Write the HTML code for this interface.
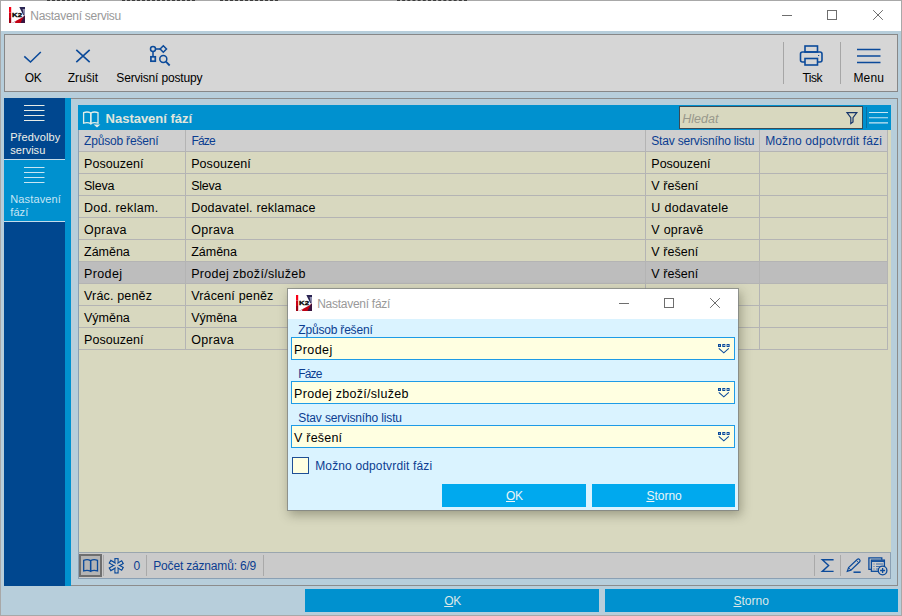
<!DOCTYPE html>
<html lang="cs">
<head>
<meta charset="utf-8">
<title>Nastavení servisu</title>
<style>
*{box-sizing:border-box;margin:0;padding:0}
html,body{width:902px;height:616px;overflow:hidden}
body{position:relative;background:#b7cedb;font-family:"Liberation Sans","DejaVu Sans",sans-serif;font-size:12.5px;color:#000}
.abs{position:absolute}
.t{position:absolute;white-space:nowrap;line-height:1}
#titlebar{left:1px;top:1px;width:900px;height:30px;background:#fff}
#toolbar{left:4px;top:34px;width:894px;height:58px;background:#d6d6d6;border:1px solid #878787}
#side{left:4px;top:98px;width:61px;height:488px;background:#00478f}
#sidestrip{left:65px;top:98px;width:6px;height:488px;background:#0091cf}
#sidesel{left:4px;top:160px;width:61px;height:61px;background:#0091cf}
#frame{left:71px;top:98px;width:827px;height:488px;border:1px solid #8c8c8c;border-left:none}
#phead{left:78px;top:105px;width:813px;height:25px;background:#0091cf}
#search{left:679px;top:106px;width:184px;height:23px;background:#d8d8bf;border:1px solid #3a4a55}
#grid{left:78px;top:130px;width:813px;height:422px;background:#d8d8bf;border-left:1px solid #8aa0b4}
#tw{position:absolute;left:0;top:0;width:902px;height:616px;padding:130px 0 0 79px}
table{border-collapse:separate;border-spacing:0;table-layout:fixed;width:809px}
td,th{height:22px;border-right:1px solid #b4b4b4;border-bottom:1px solid #b4b4b4;font-weight:normal}
th{background:#cfcfcf}
tr.sel td{background:#bdbdbd}
#status{left:78px;top:552px;width:813px;height:27px;background:#cacaca;border:1px solid #8aa0b4;border-top-color:#9aa6ae}
.bbtn{background:#0091cf;height:23px;top:589px}
#dlg{left:288px;top:289px;width:450px;height:221px;background:#daf3ff;box-shadow:0 0 0 1px rgba(125,130,130,.75),2px 4px 10px 1px rgba(50,50,30,.36)}
#dtitle{left:288px;top:289px;width:450px;height:30px;background:#fff}
.inp{background:#ffffe1;border:1px solid #1e9be6;height:23px;left:291px;width:444px}
.dbtn{background:#00a9ee;height:23px;top:484px}
u{text-decoration:underline;text-decoration-thickness:1px;text-underline-offset:0.500px}
</style>
</head>
<body>

<div class="abs" style="left:0;top:0;width:902px;height:1px;background:#a8a8a8"></div>
<div class="abs" style="left:0;top:0;width:1px;height:616px;background:#a8a8a8"></div>
<div class="abs" style="left:901px;top:0;width:1px;height:616px;background:#a8a8a8"></div>
<div class="abs" style="left:0;top:615px;width:902px;height:1px;background:#a8a8a8"></div>
<div class="abs" style="left:47px;top:0;width:43px;height:1px;border-top:1px dashed #3c3c3c"></div>
<div class="abs" style="left:122px;top:0;width:73px;height:1px;border-top:1px dashed #3c3c3c"></div>
<div class="abs" style="left:220px;top:0;width:58px;height:1px;border-top:1px dashed #3c3c3c"></div>
<div class="abs" style="left:397px;top:0;width:70px;height:1px;border-top:1px dashed #3c3c3c"></div>
<div id="titlebar" class="abs"></div>
<svg class="abs" style="left:9px;top:7px" width="16" height="16" viewBox="0 0 16 16">
  <rect x="0" y="0" width="16" height="16" fill="#fff"/>
  <rect x="0" y="0" width="2.200" height="5.500" fill="#f80016"/>
  <rect x="0" y="5.500" width="2.200" height="5.500" fill="#cc0014"/>
  <rect x="0" y="11" width="2.200" height="5" fill="#9c0011"/>
  <polygon points="10.300,0 16,0 16,8.200 14.300,8.200" fill="#2a2452"/>
  <polygon points="13.500,2 16,2 16,8.200 15,8.200" fill="#8f8fb0"/>
  <polygon points="3,16 16,16 16,8.600 13.600,10.300" fill="#c20012"/>
  <polygon points="3,16 6,16 6.500,14.200" fill="#d9dff0"/>
  <polygon points="11.500,16 16,16 16,8.600 14.500,9.700" fill="#3a1440"/>
  <text x="3" y="10" font-family="Liberation Sans, sans-serif" font-weight="bold" font-size="5.800" textLength="10" lengthAdjust="spacingAndGlyphs" fill="#000" stroke="#000" stroke-width="0.300">K2</text>
</svg>
<span class="t" id="t27" style="left:30.3px;top:10px;font-size:12px;color:#999;letter-spacing:-0.28px;">Nastavení servisu</span>
<svg class="abs" style="left:770px;top:1px" width="130" height="30" viewBox="0 0 130 30" fill="none" stroke="#6e6e6e" stroke-width="1">
  <path d="M12 14.500h10"/>
  <rect x="57.500" y="9.500" width="9" height="9"/>
  <path d="M103.500 9.500l9 9M112.500 9.500l-9 9" stroke-linecap="square"/>
</svg>

<div id="toolbar" class="abs"></div>
<svg class="abs" style="left:20px;top:44px" width="160" height="24" viewBox="0 0 160 24" fill="none" stroke="#0b4a9a" stroke-width="1.600">
  <path d="M4.300 12.400l6.200 5.600L20.800 8"/>
  <path d="M56.300 5.800l13.400 12.400M69.700 5.800L56.300 18.200"/>
  <g stroke-width="1.500">
  <circle cx="133" cy="5" r="2.500"/>
  <rect x="130.900" y="12.800" width="4.400" height="4.400" stroke-width="1.700"/>
  <path d="M133 7.500v4.500M135.500 5h4.600"/>
  <path d="M143.300 1.800l3.200 3.200-3.200 3.200-3.200-3.200z"/>
  <circle cx="143.300" cy="15.100" r="3.500"/>
  <path d="M145.900 17.700l3.800 3.800" stroke-width="1.800"/>
  </g>
</svg>
<span class="t" id="t28" style="left:24.8px;top:72px;font-size:12px;color:#000;letter-spacing:-0.32px;">OK</span>
<span class="t" id="t29" style="left:67.7px;top:72px;font-size:12px;color:#000;letter-spacing:0.07px;">Zrušit</span>
<span class="t" id="t30" style="left:116.3px;top:72px;font-size:12px;color:#000;letter-spacing:-0.17px;">Servisní postupy</span>
<div class="abs" style="left:783px;top:42px;width:1px;height:42px;background:#a6a6a6"></div>
<div class="abs" style="left:840px;top:42px;width:1px;height:42px;background:#a6a6a6"></div>
<svg class="abs" style="left:798px;top:43px" width="90" height="26" viewBox="0 0 90 26" fill="none" stroke="#0b4a9a" stroke-width="1.600">
  <rect x="7" y="3" width="12.500" height="6"/>
  <rect x="2.500" y="9" width="21.500" height="10" rx="2"/>
  <rect x="7" y="15.500" width="12.500" height="6.500" fill="#d6d6d6"/>
  <path d="M20 12.500h1.200" stroke-width="1.200"/>
  <path d="M59 6.500h23.500M59 13h23.500M59 19.500h23.500" stroke-width="1.400"/>
</svg>
<span class="t" id="t31" style="left:802.4px;top:72px;font-size:12px;color:#000;letter-spacing:-0.44px;">Tisk</span>
<span class="t" id="t32" style="left:853.4px;top:72px;font-size:12px;color:#000;letter-spacing:0.17px;">Menu</span>

<div id="side" class="abs"></div>
<div id="sidesel" class="abs"></div>
<div id="sidestrip" class="abs"></div>
<div class="abs" style="left:4px;top:159px;width:61px;height:1px;background:#c4dcea"></div>
<div class="abs" style="left:4px;top:221px;width:61px;height:1px;background:#c4dcea"></div>
<svg class="abs" style="left:24px;top:104px" width="21" height="80" viewBox="0 0 21 80" stroke="#e8ece6" stroke-width="1.100">
  <path d="M0 1.500h20.500M0 6.500h20.500M0 11.500h20.500M0 16.500h20.500"/>
  <path d="M0 63.500h20.500M0 68.500h20.500M0 73.500h20.500M0 78.500h20.500" stroke="#c9e6f3"/>
</svg>
<span class="t" id="t33" style="left:10.3px;top:132px;font-size:11px;color:#f0f2ea;letter-spacing:0.14px;">Předvolby</span>
<span class="t" id="t34" style="left:10.3px;top:145px;font-size:11px;color:#f0f2ea;letter-spacing:0.02px;">servisu</span>
<span class="t" id="t35" style="left:10.3px;top:194px;font-size:11px;color:#c5e5f4;letter-spacing:0.12px;">Nastavení</span>
<span class="t" id="t36" style="left:10.3px;top:207px;font-size:11px;color:#c5e5f4;letter-spacing:0.07px;">fází</span>

<div id="frame" class="abs"></div>
<div id="phead" class="abs"></div>
<svg class="abs" style="left:82px;top:110px" width="20" height="18" viewBox="0 0 20 18" fill="none" stroke="#e4eee8" stroke-width="1.300">
  <path d="M1.600 2.600q4-1.400 7.200 .4v10.600q-3.200-1.600-7.200-.4z"/>
  <path d="M16 2.600q-4-1.400-7.200 .4v10.600q3.200-1.600 7.200-.4z"/>
  <path d="M11.600 14.600h6.800l-3.400 3z" fill="#e4eee8" stroke="none"/>
</svg>
<span class="t" id="t37" style="left:105.6px;top:112px;font-size:13px;color:#e0e6dc;letter-spacing:-0.02px;font-weight:bold;">Nastavení fází</span>
<div id="search" class="abs"></div>
<span class="t" id="t38" style="left:682.2px;top:113px;font-size:12.5px;color:#98988c;letter-spacing:0.04px;font-style:italic;">Hledat</span>
<svg class="abs" style="left:845px;top:111px" width="14" height="14" viewBox="0 0 14 14" fill="none" stroke="#16356b" stroke-width="1.200">
  <path d="M2 1.700h9.800l-3.800 5v4.300l-2.200 1.500V6.700z"/>
</svg>
<div class="abs" style="left:866px;top:107px;width:1px;height:21px;background:#0a6fa3"></div>
<svg class="abs" style="left:869px;top:110px" width="20" height="16" viewBox="0 0 20 16" stroke="#c9e6f3" stroke-width="1.100">
  <path d="M0 2.500h19M0 7.700h19M0 12.900h19"/>
</svg>

<div id="grid" class="abs"></div>
<div id="tw"><table>
<colgroup><col style="width:107px"><col style="width:460px"><col style="width:114px"><col style="width:128px"></colgroup>
<tr><th><span class="t" id="t39" style="left:84.0px;top:135px;font-size:12px;color:#0b3d91;letter-spacing:-0.18px;">Způsob řešení</span></th><th><span class="t" id="t40" style="left:191.4px;top:135px;font-size:12px;color:#0b3d91;letter-spacing:-0.82px;">Fáze</span></th><th><span class="t" id="t41" style="left:651.3px;top:135px;font-size:12px;color:#0b3d91;letter-spacing:-0.18px;">Stav servisního listu</span></th><th><span class="t" id="t42" style="left:765.2px;top:135px;font-size:12px;color:#0b3d91;letter-spacing:0.13px;">Možno odpotvrdit fázi</span></th></tr>
<tr><td><span class="t" id="t0" style="left:84.0px;top:158px;font-size:12.5px;color:#000;letter-spacing:0.06px;">Posouzení</span></td><td><span class="t" id="t1" style="left:191.2px;top:158px;font-size:12.5px;color:#000;letter-spacing:0.06px;">Posouzení</span></td><td><span class="t" id="t2" style="left:651.3px;top:158px;font-size:12.5px;color:#000;">Posouzení</span></td><td></td></tr>
<tr><td><span class="t" id="t3" style="left:84.0px;top:180px;font-size:12.5px;color:#000;letter-spacing:-0.22px;">Sleva</span></td><td><span class="t" id="t4" style="left:191.2px;top:180px;font-size:12.5px;color:#000;letter-spacing:-0.22px;">Sleva</span></td><td><span class="t" id="t5" style="left:651.3px;top:180px;font-size:12.5px;color:#000;letter-spacing:0.05px;">V řešení</span></td><td></td></tr>
<tr><td><span class="t" id="t6" style="left:84.0px;top:202px;font-size:12.5px;color:#000;letter-spacing:0.30px;">Dod. reklam.</span></td><td><span class="t" id="t7" style="left:191.2px;top:202px;font-size:12.5px;color:#000;letter-spacing:0.18px;">Dodavatel. reklamace</span></td><td><span class="t" id="t8" style="left:651.3px;top:202px;font-size:12.5px;color:#000;letter-spacing:0.30px;">U dodavatele</span></td><td></td></tr>
<tr><td><span class="t" id="t9" style="left:84.0px;top:224px;font-size:12.5px;color:#000;letter-spacing:0.30px;">Oprava</span></td><td><span class="t" id="t10" style="left:191.2px;top:224px;font-size:12.5px;color:#000;letter-spacing:0.30px;">Oprava</span></td><td><span class="t" id="t11" style="left:651.3px;top:224px;font-size:12.5px;color:#000;letter-spacing:0.27px;">V opravě</span></td><td></td></tr>
<tr><td><span class="t" id="t12" style="left:84.0px;top:246px;font-size:12.5px;color:#000;letter-spacing:-0.01px;">Záměna</span></td><td><span class="t" id="t13" style="left:191.2px;top:246px;font-size:12.5px;color:#000;letter-spacing:-0.01px;">Záměna</span></td><td><span class="t" id="t14" style="left:651.3px;top:246px;font-size:12.5px;color:#000;letter-spacing:0.05px;">V řešení</span></td><td></td></tr>
<tr class=sel><td><span class="t" id="t15" style="left:84.0px;top:268px;font-size:12.5px;color:#000;letter-spacing:0.39px;">Prodej</span></td><td><span class="t" id="t16" style="left:191.2px;top:268px;font-size:12.5px;color:#000;letter-spacing:0.29px;">Prodej zboží/služeb</span></td><td><span class="t" id="t17" style="left:651.3px;top:268px;font-size:12.5px;color:#000;letter-spacing:0.05px;">V řešení</span></td><td></td></tr>
<tr><td><span class="t" id="t18" style="left:84.0px;top:290px;font-size:12.5px;color:#000;letter-spacing:0.17px;">Vrác. peněz</span></td><td><span class="t" id="t19" style="left:191.2px;top:290px;font-size:12.5px;color:#000;letter-spacing:0.17px;">Vrácení peněz</span></td><td><span class="t" id="t20" style="left:651.3px;top:290px;font-size:12.5px;color:#000;letter-spacing:0.05px;">V řešení</span></td><td></td></tr>
<tr><td><span class="t" id="t21" style="left:84.0px;top:312px;font-size:12.5px;color:#000;letter-spacing:-0.01px;">Výměna</span></td><td><span class="t" id="t22" style="left:191.2px;top:312px;font-size:12.5px;color:#000;letter-spacing:-0.01px;">Výměna</span></td><td><span class="t" id="t23" style="left:651.3px;top:312px;font-size:12.5px;color:#000;letter-spacing:0.05px;">V řešení</span></td><td></td></tr>
<tr><td><span class="t" id="t24" style="left:84.0px;top:334px;font-size:12.5px;color:#000;letter-spacing:0.06px;">Posouzení</span></td><td><span class="t" id="t25" style="left:191.2px;top:334px;font-size:12.5px;color:#000;letter-spacing:0.30px;">Oprava</span></td><td><span class="t" id="t26" style="left:651.3px;top:334px;font-size:12.5px;color:#000;letter-spacing:0.27px;">V opravě</span></td><td></td></tr>
</table></div>

<div id="status" class="abs"></div>
<div class="abs" style="left:79px;top:554px;width:23px;height:23px;border:2px solid #6f6f6f;background:#b4b4b4"></div>
<svg class="abs" style="left:82px;top:558px" width="18" height="16" viewBox="0 0 18 16" fill="none" stroke="#0b4a9a" stroke-width="1.300">
  <path d="M1.700 2.300q3.800-1.500 6.900 .300v10.600q-3.100-1.500-6.900-.300z"/>
  <path d="M15.500 2.300q-3.800-1.500-6.900 .300v10.600q3.100-1.500 6.900-.300z"/>
</svg>
<div class="abs" style="left:103px;top:555px;width:1px;height:21px;background:#a9a9a9"></div>
<svg class="abs" style="left:108px;top:557px" width="17" height="17" viewBox="0 0 17 17">
  <g fill="none" stroke="#0b4a9a" stroke-width="1.300">
    <rect x="7" y="1.700" width="3" height="14.200"/>
    <rect x="7" y="1.700" width="3" height="14.200" transform="rotate(60 8.500 8.500)"/>
    <rect x="7" y="1.700" width="3" height="14.200" transform="rotate(120 8.500 8.500)"/>
  </g>
  <g fill="#cacaca" stroke="none">
    <rect x="7.650" y="2.350" width="1.700" height="12.900"/>
    <rect x="7.650" y="2.350" width="1.700" height="12.900" transform="rotate(60 8.500 8.500)"/>
    <rect x="7.650" y="2.350" width="1.700" height="12.900" transform="rotate(120 8.500 8.500)"/>
  </g>
</svg>
<span class="t" id="t43" style="left:133.4px;top:560px;font-size:12px;color:#0b3d91;">0</span>
<div class="abs" style="left:146px;top:555px;width:1px;height:21px;background:#a9a9a9"></div>
<span class="t" id="t44" style="left:153.3px;top:560px;font-size:12px;color:#0b3d91;letter-spacing:-0.18px;">Počet záznamů: 6/9</span>
<div class="abs" style="left:263px;top:555px;width:1px;height:21px;background:#a9a9a9"></div>
<div class="abs" style="left:814px;top:555px;width:1px;height:21px;background:#a9a9a9"></div>
<div class="abs" style="left:840px;top:555px;width:1px;height:21px;background:#a9a9a9"></div>
<svg class="abs" style="left:820px;top:557px" width="16" height="17" viewBox="0 0 16 17" fill="none" stroke="#0b4a9a" stroke-width="1.400">
  <path d="M13.600 2.800H2.300l6.300 5.800-6.300 5.800h11.300"/>
</svg>
<svg class="abs" style="left:845px;top:557px" width="18" height="18" viewBox="0 0 18 18" fill="none" stroke="#0b4a9a" stroke-width="1.200">
  <path d="M2.300 14.300l1.300-3.700 8.800-8.300q1.200-.800 2.200 .300t.100 2.200l-8.800 8.300z"/>
  <path d="M3.600 10.600l2.300 2.500M11.300 3.300l2.400 2.500" stroke-width="0.900"/>
  <path d="M8.500 15.200h7.200" stroke-width="1.500"/>
</svg>
<svg class="abs" style="left:867px;top:555px" width="22" height="21" viewBox="0 0 22 21" fill="none" stroke="#0b4a9a" stroke-width="1.300">
  <path d="M4 14.400H1.900V2.900h12.900v1.800"/>
  <rect x="4.400" y="5.100" width="13" height="11.200"/>
  <path d="M4.400 6.200h13" stroke-width="1.500"/>
  <path d="M6.500 9h1M9 9h7M6.500 11.500h1M9 11.500h7M6.500 14h1M9 14h4" stroke-width="0.900" opacity="0.800"/>
  <circle cx="15.600" cy="15.500" r="4.300" fill="#cacaca"/>
  <path d="M13.100 15.500h5M15.600 13v5" stroke-width="1.300"/>
</svg>

<div class="abs bbtn" style="left:305px;width:294px"></div>
<div class="abs bbtn" style="left:605px;width:293px"></div>
<span class="t" id="t45" style="left:444.2px;top:595px;font-size:12px;color:#dbe8e8;letter-spacing:-0.33px;"><u>O</u>K</span>
<span class="t" id="t46" style="left:733.5px;top:595px;font-size:12px;color:#dbe8e8;"><u>S</u>torno</span>

<div id="dlg" class="abs"></div>
<div id="dtitle" class="abs"></div>
<svg class="abs" style="left:296px;top:295px" width="16" height="16" viewBox="0 0 16 16">
  <rect x="0" y="0" width="16" height="16" fill="#fff"/>
  <rect x="0" y="0" width="2.200" height="5.500" fill="#f80016"/>
  <rect x="0" y="5.500" width="2.200" height="5.500" fill="#cc0014"/>
  <rect x="0" y="11" width="2.200" height="5" fill="#9c0011"/>
  <polygon points="10.300,0 16,0 16,8.200 14.300,8.200" fill="#2a2452"/>
  <polygon points="13.500,2 16,2 16,8.200 15,8.200" fill="#8f8fb0"/>
  <polygon points="3,16 16,16 16,8.600 13.600,10.300" fill="#c20012"/>
  <polygon points="3,16 6,16 6.500,14.200" fill="#d9dff0"/>
  <polygon points="11.500,16 16,16 16,8.600 14.500,9.700" fill="#3a1440"/>
  <text x="3" y="10" font-family="Liberation Sans, sans-serif" font-weight="bold" font-size="5.800" textLength="10" lengthAdjust="spacingAndGlyphs" fill="#000" stroke="#000" stroke-width="0.300">K2</text>
</svg>
<span class="t" id="t47" style="left:317.2px;top:298px;font-size:12px;color:#999;letter-spacing:-0.27px;">Nastavení fází</span>
<svg class="abs" style="left:608px;top:289px" width="130" height="30" viewBox="0 0 130 30" fill="none" stroke="#6e6e6e" stroke-width="1">
  <path d="M11 14.500h10"/>
  <rect x="56.500" y="9.500" width="9" height="9"/>
  <path d="M102.500 9.500l9 9M111.500 9.500l-9 9" stroke-linecap="square"/>
</svg>
<span class="t" id="t48" style="left:298.3px;top:324px;font-size:12px;color:#0b3d91;letter-spacing:-0.19px;">Způsob řešení</span>
<div class="abs inp" style="top:337px"></div>
<span class="t" id="t49" style="left:294.1px;top:344px;font-size:12.5px;color:#000;letter-spacing:0.39px;">Prodej</span>
<svg class="abs" style="left:718px;top:344px" width="12" height="10" viewBox="0 0 12 10" fill="none" stroke="#0b4a9a">
  <rect x="0.500" y="0.500" width="2" height="2" stroke-width="1" fill="#7fa3d0"/><rect x="4.800" y="0.500" width="2" height="2" stroke-width="1" fill="#7fa3d0"/><rect x="9.100" y="0.500" width="2" height="2" stroke-width="1" fill="#7fa3d0"/>
  <path d="M0.800 4.300l5 4.500 5-4.500" stroke-width="1.100"/>
</svg>
<span class="t" id="t50" style="left:298.3px;top:368px;font-size:12px;color:#0b3d91;letter-spacing:-0.85px;">Fáze</span>
<div class="abs inp" style="top:381px"></div>
<span class="t" id="t51" style="left:294.1px;top:388px;font-size:12.5px;color:#000;letter-spacing:0.29px;">Prodej zboží/služeb</span>
<svg class="abs" style="left:718px;top:388px" width="12" height="10" viewBox="0 0 12 10" fill="none" stroke="#0b4a9a">
  <rect x="0.500" y="0.500" width="2" height="2" stroke-width="1" fill="#7fa3d0"/><rect x="4.800" y="0.500" width="2" height="2" stroke-width="1" fill="#7fa3d0"/><rect x="9.100" y="0.500" width="2" height="2" stroke-width="1" fill="#7fa3d0"/>
  <path d="M0.800 4.300l5 4.500 5-4.500" stroke-width="1.100"/>
</svg>
<span class="t" id="t52" style="left:298.3px;top:412px;font-size:12px;color:#0b3d91;letter-spacing:-0.15px;">Stav servisního listu</span>
<div class="abs inp" style="top:425px"></div>
<span class="t" id="t53" style="left:294.1px;top:432px;font-size:12.5px;color:#000;letter-spacing:0.20px;">V řešení</span>
<svg class="abs" style="left:718px;top:432px" width="12" height="10" viewBox="0 0 12 10" fill="none" stroke="#0b4a9a">
  <rect x="0.500" y="0.500" width="2" height="2" stroke-width="1" fill="#7fa3d0"/><rect x="4.800" y="0.500" width="2" height="2" stroke-width="1" fill="#7fa3d0"/><rect x="9.100" y="0.500" width="2" height="2" stroke-width="1" fill="#7fa3d0"/>
  <path d="M0.800 4.300l5 4.500 5-4.500" stroke-width="1.100"/>
</svg>
<div class="abs" style="left:292px;top:457px;width:17px;height:17px;background:#ffffe1;border:1px solid #1f4f95"></div>
<span class="t" id="t54" style="left:315.2px;top:460px;font-size:12px;color:#0b3d91;letter-spacing:0.14px;">Možno odpotvrdit fázi</span>
<div class="abs dbtn" style="left:442px;width:144px"></div>
<div class="abs dbtn" style="left:592px;width:143px"></div>
<span class="t" id="t55" style="left:506.0px;top:490px;font-size:12px;color:#eaf6f6;letter-spacing:-0.33px;"><u>O</u>K</span>
<span class="t" id="t56" style="left:646.4px;top:490px;font-size:12px;color:#eaf6f6;"><u>S</u>torno</span>
</body>
</html>
